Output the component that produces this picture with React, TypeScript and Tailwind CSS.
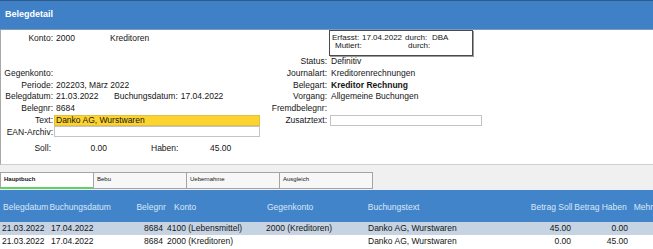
import React from 'react'

const ROW = 'h-[11.75px] flex items-center whitespace-nowrap'

function LeftLabel({ children }: { children?: React.ReactNode }) {
  return <span className="w-[52px] shrink-0 text-right">{children}</span>
}

function RightLabel({ children }: { children?: React.ReactNode }) {
  return <span className="w-[57px] shrink-0 text-right">{children}</span>
}

const tabs = ['Hauptbuch', 'Bebu', 'Uebernahme', 'Ausgleich']

const rows = [
  {
    belegdatum: '21.03.2022',
    buchungsdatum: '17.04.2022',
    belegnr: '8684',
    konto: '4100 (Lebensmittel)',
    gegenkonto: '2000 (Kreditoren)',
    text: 'Danko AG, Wurstwaren',
    soll: '45.00',
    haben: '0.00',
  },
  {
    belegdatum: '21.03.2022',
    buchungsdatum: '17.04.2022',
    belegnr: '8684',
    konto: '2000 (Kreditoren)',
    gegenkonto: '',
    text: 'Danko AG, Wurstwaren',
    soll: '0.00',
    haben: '45.00',
  },
]

export default function App() {
  return (
    <div className="w-[653px] h-[249px] overflow-hidden bg-white text-[8.5px] text-[#151515] font-['Liberation_Sans',Arial,sans-serif]">
      {/* Header */}
      <div className="h-[30px] flex items-center pl-[5px] bg-[#3f80c6] border-t border-t-[#2d5a8c] border-b border-b-[#7f9bba] text-white font-bold text-[9px]">
        Belegdetail
      </div>

      {/* Form */}
      <div className="h-[135px] flex border-l border-l-[#a8a8a8] border-b border-b-[#cfcfcf] pt-[2px]">
        {/* left column */}
        <div className="w-[269px] shrink-0 flex flex-col">
          <div className={ROW}>
            <LeftLabel>Konto:</LeftLabel>
            <span className="ml-[3px] w-[54px]">2000</span>
            <span>Kreditoren</span>
          </div>
          <div className={ROW} />
          <div className={ROW} />
          <div className={ROW}>
            <LeftLabel>Gegenkonto:</LeftLabel>
          </div>
          <div className={ROW}>
            <LeftLabel>Periode:</LeftLabel>
            <span className="ml-[3px]">202203, März 2022</span>
          </div>
          <div className={ROW}>
            <LeftLabel>Belegdatum:</LeftLabel>
            <span className="ml-[3px] w-[58px]">21.03.2022</span>
            <span>Buchungsdatum:</span>
            <span className="ml-[3px]">17.04.2022</span>
          </div>
          <div className={ROW}>
            <LeftLabel>Belegnr:</LeftLabel>
            <span className="ml-[3px]">8684</span>
          </div>
          <div className={ROW}>
            <LeftLabel>Text:</LeftLabel>
            <div className="ml-[1px] w-[206px] h-[11px] bg-[#fdd330] border border-[#e0c040] flex items-center pl-[1px]">
              Danko AG, Wurstwaren
            </div>
          </div>
          <div className={ROW}>
            <LeftLabel>EAN-Archiv:</LeftLabel>
            <div className="ml-[1px] w-[206px] h-[11px] bg-white border border-[#c4c4c4]" />
          </div>
          <div className={`${ROW} mt-[4.5px]`}>
            <span className="w-[50px] text-right">Soll:</span>
            <span className="w-[56px] text-right">0.00</span>
            <span className="ml-[44px] w-[26px]">Haben:</span>
            <span className="ml-[33px]">45.00</span>
          </div>
        </div>

        {/* right column */}
        <div className="flex-1 flex flex-col">
          <div className="-mt-[2px] ml-[59px] w-[144px] h-[25.5px] border border-[#4a4a4a] shadow-[1px_1px_0_#9a9a9a] pt-[3px] leading-[8px] text-[8px] whitespace-nowrap">
            <div className="flex">
              <span className="w-[32px] pl-[2px]">Erfasst:</span>
              <span className="w-[43px]">17.04.2022</span>
              <span className="w-[27px]">durch:</span>
              <span>DBA</span>
            </div>
            <div className="flex">
              <span className="w-[32px] pl-[5px]">Mutiert:</span>
              <span className="w-[46px]" />
              <span>durch:</span>
            </div>
          </div>
          <div className={ROW}>
            <RightLabel>Status:</RightLabel>
            <span className="ml-[4px]">Definitiv</span>
          </div>
          <div className={ROW}>
            <RightLabel>Journalart:</RightLabel>
            <span className="ml-[4px]">Kreditorenrechnungen</span>
          </div>
          <div className={ROW}>
            <RightLabel>Belegart:</RightLabel>
            <span className="ml-[4px] font-bold">Kreditor Rechnung</span>
          </div>
          <div className={ROW}>
            <RightLabel>Vorgang:</RightLabel>
            <span className="ml-[4px]">Allgemeine Buchungen</span>
          </div>
          <div className={ROW}>
            <RightLabel>Fremdbelegnr:</RightLabel>
          </div>
          <div className={ROW}>
            <RightLabel>Zusatztext:</RightLabel>
            <div className="ml-[3px] w-[152px] h-[11px] bg-white border border-[#c4c4c4]" />
          </div>
        </div>
      </div>

      {/* Tabs */}
      <div className="h-[25px] bg-[#f0f0f0] pt-[7px] flex">
        {tabs.map((t, i) => (
          <div
            key={t}
            className={`w-[94px] h-[17px] border border-[#a4a4a4] pl-[3px] pt-[3px] text-[6px] leading-[7px] ${
              i === 0 ? 'bg-white font-bold border-b-2 border-b-[#62d162]' : 'bg-[#f7f7f7] -ml-px'
            }`}
          >
            {t}
          </div>
        ))}
      </div>

      {/* Grid header */}
      <div className="h-[32px] bg-[#4284c9] text-[#d9e8f9] flex items-center pt-[2px] whitespace-nowrap">
        <span className="w-[50px] pl-[3px]">Belegdatum</span>
        <span className="w-[88px]">Buchungsdatum</span>
        <span className="w-[38px]">Belegnr</span>
        <span className="w-[94px]">Konto</span>
        <span className="w-[102px]">Gegenkonto</span>
        <span className="w-[165px]">Buchungstext</span>
        <span className="w-[44px]">Betrag Soll</span>
        <span className="w-[60px]">Betrag Haben</span>
        <span>Mehr</span>
      </div>

      {/* Grid rows */}
      {rows.map((r, i) => (
        <div
          key={i}
          className={`h-[13px] flex items-center whitespace-nowrap ${i === 0 ? 'bg-[#c6d3e3]' : 'bg-white'}`}
        >
          <span className="w-[49px] pl-[2px]">{r.belegdatum}</span>
          <span className="w-[89px] pl-[2px]">{r.buchungsdatum}</span>
          <span className="w-[25px] text-right">{r.belegnr}</span>
          <span className="w-[103px] pl-[4px]">{r.konto}</span>
          <span className="w-[102px]">{r.gegenkonto}</span>
          <span className="w-[165px]">{r.text}</span>
          <span className="w-[38px] text-right">{r.soll}</span>
          <span className="w-[57px] text-right">{r.haben}</span>
        </div>
      ))}
    </div>
  )
}
